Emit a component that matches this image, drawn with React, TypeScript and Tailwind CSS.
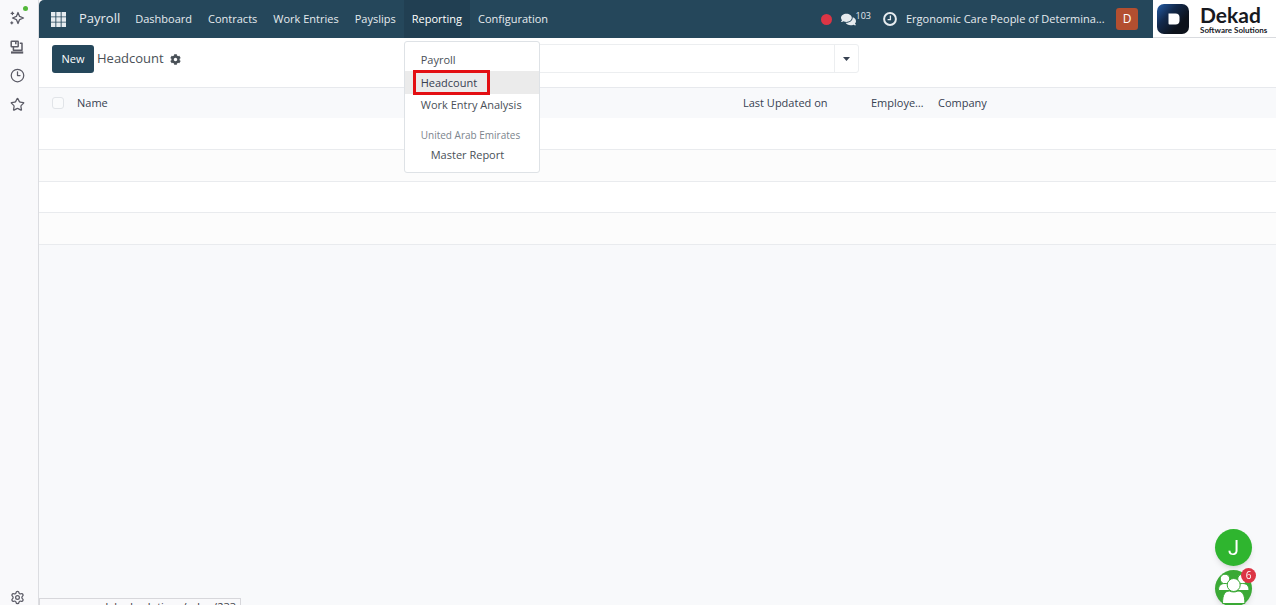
import { Clock3, Settings, Star } from 'lucide-react';
import { FaCog, FaComments } from 'react-icons/fa';

const menus = [
  { label: 'Dashboard' },
  { label: 'Contracts' },
  { label: 'Work Entries' },
  { label: 'Payslips' },
  { label: 'Reporting', open: true },
  { label: 'Configuration' },
];

const rows = [1, 2, 3, 4];

function SparkleIcon() {
  return (
    <svg width="16" height="16" viewBox="0 0 16 16" fill="none" stroke="currentColor" strokeWidth="1.3" strokeLinejoin="round">
      <path d="M9 2.5 10.6 6.4 14.5 8 10.6 9.6 9 13.5 7.4 9.6 3.5 8 7.4 6.4Z" />
      <path d="M3.4 2.2v2.4M2.2 3.4h2.4M2.8 11.8v2M1.8 12.8h2" strokeLinecap="round" />
    </svg>
  );
}

function DevicesIcon() {
  return (
    <svg width="14" height="14" viewBox="0 0 14 14" fill="none" stroke="currentColor" strokeWidth="1.5" strokeLinejoin="round">
      <rect x="1.2" y="1.2" width="7" height="5.6" rx=".6" />
      <path d="M5.8 1.2v3M9.8 3.2h2.2v7H3.4V7" />
      <path d="M1 12.5h12.2" strokeWidth="2.2" />
    </svg>
  );
}

function AppsIcon() {
  return (
    <svg width="15" height="15" viewBox="0 0 15 15" fill="currentColor">
      <path d="M0 0h4.4v4.4H0zM5.3 0h4.4v4.4H5.3zM10.6 0H15v4.4h-4.4zM0 5.3h4.4v4.4H0zM5.3 5.3h4.4v4.4H5.3zM10.6 5.3H15v4.4h-4.4zM0 10.6h4.4V15H0zM5.3 10.6h4.4V15H5.3zM10.6 10.6H15V15h-4.4z" />
    </svg>
  );
}

function ActivityIcon() {
  return (
    <svg width="14" height="14" viewBox="0 0 14 14" fill="none" stroke="currentColor">
      <circle cx="7" cy="7" r="5.9" strokeWidth="2" />
      <path d="M7.4 3.6v4H4.6" strokeWidth="1.3" />
    </svg>
  );
}

function DekadMark() {
  return (
    <svg width="32" height="30" viewBox="0 0 32 30">
      <defs>
        <linearGradient id="mark" x1="0" y1="0" x2=".75" y2=".65">
          <stop offset="0" stopColor="#245da8" />
          <stop offset=".5" stopColor="#132a4d" />
          <stop offset="1" stopColor="#0d121b" />
        </linearGradient>
      </defs>
      <rect width="32" height="30" rx="7" fill="url(#mark)" />
      <path d="M11.500 9.500h7a4 4 0 0 1 4 4v3a4 4 0 0 1-4 4h-6a1 1 0 0 1-1-1Z" fill="#fff" />
    </svg>
  );
}

function GroupIcon() {
  return (
    <svg width="37" height="37" viewBox="0 0 37 37" fill="#fff" stroke="#3aa935" strokeWidth="1">
      <circle cx="10" cy="9" r="4.8" />
      <circle cx="27.5" cy="9" r="4.8" />
      <path d="M3.5 20.5c0-5 2-7 6.5-7s6 2 6 7ZM21.5 20.500c0-5 2-7 6-7s6.500 2 6.500 7Z" />
      <circle cx="18.7" cy="15" r="6.5" />
      <path d="M7.500 33.500c0-9 2.500-12.500 7-12.500 2.400 1.300 6 1.300 8.400 0 4.500 0 7 3.500 7 12.500Z" />
    </svg>
  );
}

function Rail() {
  return (
    <aside className="flex w-[39px] shrink-0 flex-col items-center border-r border-[#dcdde1] bg-[#f9f9fb] pt-[10px] text-[#5b5b66]">
      <div className="flex flex-col items-center gap-[14px] pr-1">
        <button aria-label="Assistant" className="relative">
          <SparkleIcon />
          <span className="absolute -top-1 -right-[3px] size-[5px] rounded-full bg-[#53b83a]" />
        </button>
        <button aria-label="Synced tabs">
          <DevicesIcon />
        </button>
        <button aria-label="History">
          <Clock3 size={15} strokeWidth={2} />
        </button>
        <button aria-label="Bookmarks">
          <Star size={15} strokeWidth={2} />
        </button>
      </div>
      <button aria-label="Settings" className="mt-auto pr-1">
        <Settings size={15} strokeWidth={2} />
      </button>
    </aside>
  );
}

function ReportingMenu() {
  return (
    <div className="absolute top-[41px] left-0 z-10 w-[136px] rounded-[3px] border border-[#dee2e6] bg-white pt-[7px] pb-[6px] text-[11px] text-[#495057]">
      <a href="#payroll" className="block px-4 leading-[22px]">Payroll</a>
      <a href="#headcount" className="relative block bg-[#ebebeb] px-4 leading-[23px] text-[#374151]">
        Headcount
        <span className="absolute -inset-y-px left-2 w-[77px] border-[3px] border-[#e30f13]" />
      </a>
      <a href="#analysis" className="block px-4 leading-[22px] whitespace-nowrap">Work Entry Analysis</a>
      <p className="px-4 pt-[10px] text-[10px] leading-[18px] whitespace-nowrap text-[#7b848d]">United Arab Emirates</p>
      <a href="#master" className="block pl-[26px] leading-[22px]">Master Report</a>
    </div>
  );
}

function Navbar() {
  return (
    <header className="flex h-[38px] shrink-0">
      <div className="flex min-w-0 flex-1 items-center rounded-tl-[5px] bg-[#25475b] pr-[15px] pl-3 text-[#e6ebef]">
        <button aria-label="Home menu">
          <AppsIcon />
        </button>
        <a href="#home" className="mr-[7px] ml-[13px] text-[13px]">Payroll</a>
        <nav className="flex h-full text-[11px]">
          {menus.map(({ label, open }) => (
            <div key={label} className="relative">
              <button
                className={`h-full px-2 whitespace-nowrap ${open ? 'bg-[#213f52] text-white' : ''}`}
              >
                {label}
              </button>
              {open && <ReportingMenu />}
            </div>
          ))}
        </nav>
        <div className="ml-auto flex items-center">
          <span className="size-[11px] rounded-full bg-[#dc3545]" />
          <button aria-label="Messages" className="ml-[9px] flex items-center">
            <FaComments size={15} />
            <span className="pb-[6px] text-[9px] leading-3">103</span>
          </button>
          <button aria-label="Activities" className="ml-3">
            <ActivityIcon />
          </button>
          <button className="ml-[9px] w-[200px] text-left text-[11px] whitespace-nowrap">
            Ergonomic Care People of Determina...
          </button>
          <button className="ml-[10px] size-[22px] rounded-[3px] bg-[#b34f30] text-[12px] text-white">D</button>
        </div>
      </div>
      <div className="flex w-[123px] shrink-0 items-center gap-[11px] border-b border-[#d9dbdf] bg-white pl-1 text-[#17191f]">
        <DekadMark />
        <div className="pt-[3px] font-[Lato]">
          <p className="text-[21px] leading-[20px] font-bold">Dekad</p>
          <p className="text-[8px] leading-[10px] font-bold whitespace-nowrap">Software Solutions</p>
        </div>
      </div>
    </header>
  );
}

function ControlPanel() {
  return (
    <div className="grid shrink-0 grid-cols-[1fr_402px_1fr] items-center border-b border-[#e7e9ed] bg-white pt-[6px] pb-[14px]">
      <div className="flex items-center pl-[13px]">
        <button className="h-[28px] w-[42px] rounded-[3px] bg-[#25475b] pt-px text-[11px] text-white">New</button>
        <h1 className="ml-[3px] pt-px text-[13px] text-[#495057]">Headcount</h1>
        <button aria-label="Actions" className="ml-[6px] pt-px text-[#495057]">
          <FaCog size={11} />
        </button>
      </div>
      <div className="flex h-[29px] rounded-[3px] border border-[#eceef0]">
        <input aria-label="Search" className="min-w-0 flex-1 outline-none" />
        <button aria-label="Search options" className="flex w-6 items-center justify-center border-l border-[#eceef0] text-[#374151]">
          <svg width="7" height="4" viewBox="0 0 7 4" fill="currentColor">
            <path d="M0 0h7L3.5 4Z" />
          </svg>
        </button>
      </div>
    </div>
  );
}

function HeadcountList() {
  return (
    <table className="w-full table-fixed border-b border-[#d9dde3] bg-white text-left text-[11px] text-[#374151]">
      <colgroup>
        <col className="w-[31px]" />
        <col />
        <col className="w-[128px]" />
        <col className="w-[67px]" />
        <col className="w-[344px]" />
      </colgroup>
      <thead>
        <tr className="h-[30px] bg-[#f8f9fb]">
          <th className="pl-[13px]">
            <input
              type="checkbox"
              aria-label="Select all"
              className="block size-3 appearance-none rounded-[3px] border border-[#e1e4e8] bg-[#fafbfc]"
            />
          </th>
          <th className="px-[7px] font-medium">Name</th>
          <th className="px-[6px] font-medium">Last Updated on</th>
          <th className="truncate px-[6px] font-medium">Employees</th>
          <th className="px-[6px] font-medium">Company</th>
        </tr>
      </thead>
      <tbody>
        {rows.map((row) => (
          <tr key={row} className="h-[31px] border-b border-[#e9ebee] even:h-8 even:bg-[#fcfcfc]">
            <td colSpan={5} />
          </tr>
        ))}
      </tbody>
    </table>
  );
}

export default function App() {
  return (
    <div className="flex h-screen overflow-hidden bg-[#f9f9fb] font-['Open_Sans',sans-serif]">
      <Rail />
      <div className="flex min-w-0 flex-1 flex-col">
        <Navbar />
        <ControlPanel />
        <main className="flex-1 bg-[#f8f9fb]">
          <HeadcountList />
        </main>
      </div>

      <div className="fixed right-6 -bottom-[2px] flex flex-col gap-1">
        <button className="size-[37px] rounded-full bg-[#2fb52f] font-[Roboto] text-[20px] text-white shadow-md">J</button>
        <button aria-label="Group chat" className="relative size-[37px] rounded-full bg-[#3aa935] shadow-md">
          <GroupIcon />
          <span className="absolute -top-[2px] -right-1 size-[15px] rounded-full bg-[#dc3545] text-[10px] leading-[15px] text-white">
            6
          </span>
        </button>
      </div>

      <div className="fixed -bottom-[9px] left-[39px] h-4 w-[202px] overflow-hidden border border-[#d7d7db] bg-[#f9f9fb] px-1 text-right text-[11px] leading-4 whitespace-nowrap text-[#3a3a44]">
        ergocare.dekad.solutions/odoo/233
      </div>
    </div>
  );
}
